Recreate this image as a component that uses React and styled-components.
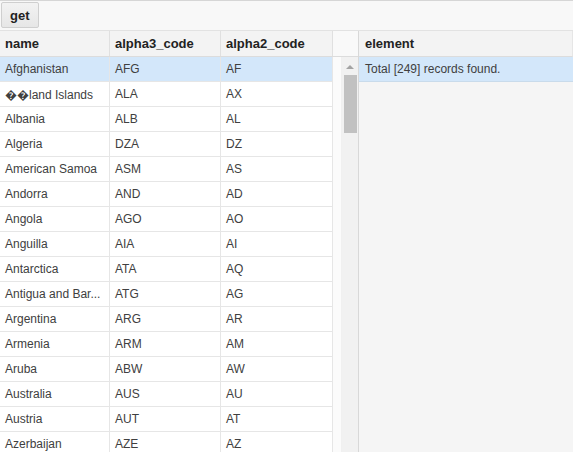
import React from 'react'
import styled, { createGlobalStyle } from 'styled-components'

const Global = createGlobalStyle`
html, body {
  margin: 0;
  padding: 0;
  background: #ffffff;
  font-family: "Liberation Sans", Arial, sans-serif;
  overflow: hidden;
}
`

const Page = styled.div`
width: 573px;
height: 452px;
display: flex;
flex-direction: column;
overflow: hidden;
`

const Toolbar = styled.div`
height: 30px;
box-sizing: border-box;
border-top: 1px solid #d6d6d6;
background: #f8f8f8;
display: flex;
align-items: center;
padding: 0 0 1px 1px;
`

const Button = styled.button`
height: 26px;
padding: 0 8px;
border: 1px solid #cfcfcf;
border-radius: 2px;
background: linear-gradient(#f2f2f2, #e6e6e6);
font-family: "Liberation Sans", Arial, sans-serif;
font-size: 13px;
font-weight: bold;
color: #222;
`

const Main = styled.div`
flex: 1;
display: flex;
min-height: 0;
border-top: 1px solid #e2e2e2;
`

const GridPanel = styled.div`
width: 358px;
display: flex;
flex-direction: column;
`

const HeaderRow = styled.div`
display: flex;
height: 26px;
box-sizing: border-box;
border-bottom: 1px solid #dcdcdc;
background: #f3f3f3;
`

const HeadCell = styled.div`
width: ${p => p.w}px;
box-sizing: border-box;
padding-left: 5px;
display: flex;
align-items: center;
font-size: 13px;
font-weight: bold;
color: #222;
border-right: 1px solid #e0e0e0;
`

const HeadFill = styled.div`
flex: 1;
background: #f9f9f9;
`

const Body = styled.div`
flex: 1;
display: flex;
min-height: 0;
`

const Rows = styled.div`
width: 333px;
overflow: hidden;
`

const Row = styled.div`
display: flex;
height: 25px;
box-sizing: border-box;
border-bottom: 1px solid #e6e6e6;
background: ${p => (p.selected ? '#d3e7fa' : '#ffffff')};
`

const Cell = styled.div`
width: ${p => p.w}px;
box-sizing: border-box;
padding-left: 5px;
display: flex;
align-items: center;
font-size: 12px;
color: #404040;
white-space: nowrap;
overflow: hidden;
border-right: 1px solid #e6e6e6;
`

const Gap = styled.div`
width: 8px;
background: #fbfbfb;
border-right: 1px solid #f0f0f0;
`

const ScrollTrack = styled.div`
width: 16px;
background: #f1f1f1;
display: flex;
flex-direction: column;
align-items: center;
padding-top: 8px;
box-sizing: border-box;
`

const Arrow = styled.div`
width: 0;
height: 0;
border-left: 4px solid transparent;
border-right: 4px solid transparent;
border-bottom: 4px solid #a3a3a3;
margin-bottom: 6px;
`

const Thumb = styled.div`
width: 13px;
height: 58px;
background: #c1c1c1;
`

const SidePanel = styled.div`
flex: 1;
display: flex;
flex-direction: column;
border-left: 1px solid #d8d8d8;
background: #f5f5f5;
`

const SideHead = styled.div`
height: 26px;
box-sizing: border-box;
padding-left: 6px;
display: flex;
align-items: center;
font-size: 13px;
font-weight: bold;
color: #222;
background: #f3f3f3;
border-bottom: 1px solid #dcdcdc;
border-right: 1px solid #e6e6e6;
`

const Message = styled.div`
height: 25px;
box-sizing: border-box;
padding-left: 6px;
display: flex;
align-items: center;
font-size: 12px;
color: #404040;
background: #d3e7fa;
border-bottom: 1px solid #c9dbeb;
`

const cols = [110, 111, 112]

const data = [
  ['Afghanistan', 'AFG', 'AF'],
  ['\uFFFD\uFFFDland Islands', 'ALA', 'AX'],
  ['Albania', 'ALB', 'AL'],
  ['Algeria', 'DZA', 'DZ'],
  ['American Samoa', 'ASM', 'AS'],
  ['Andorra', 'AND', 'AD'],
  ['Angola', 'AGO', 'AO'],
  ['Anguilla', 'AIA', 'AI'],
  ['Antarctica', 'ATA', 'AQ'],
  ['Antigua and Bar...', 'ATG', 'AG'],
  ['Argentina', 'ARG', 'AR'],
  ['Armenia', 'ARM', 'AM'],
  ['Aruba', 'ABW', 'AW'],
  ['Australia', 'AUS', 'AU'],
  ['Austria', 'AUT', 'AT'],
  ['Azerbaijan', 'AZE', 'AZ'],
]

export default function App() {
  return (
    <>
      <Global />
      <Page>
        <Toolbar>
          <Button>get</Button>
        </Toolbar>
        <Main>
          <GridPanel>
            <HeaderRow>
              <HeadCell w={cols[0]}>name</HeadCell>
              <HeadCell w={cols[1]}>alpha3_code</HeadCell>
              <HeadCell w={cols[2]}>alpha2_code</HeadCell>
              <HeadFill />
            </HeaderRow>
            <Body>
              <Rows>
                {data.map((r, i) => (
                  <Row key={i} selected={i === 0}>
                    {r.map((v, j) => (
                      <Cell key={j} w={cols[j]}>{v}</Cell>
                    ))}
                  </Row>
                ))}
              </Rows>
              <Gap />
              <ScrollTrack>
                <Arrow />
                <Thumb />
              </ScrollTrack>
            </Body>
          </GridPanel>
          <SidePanel>
            <SideHead>element</SideHead>
            <Message>Total [249] records found.</Message>
          </SidePanel>
        </Main>
      </Page>
    </>
  )
}
